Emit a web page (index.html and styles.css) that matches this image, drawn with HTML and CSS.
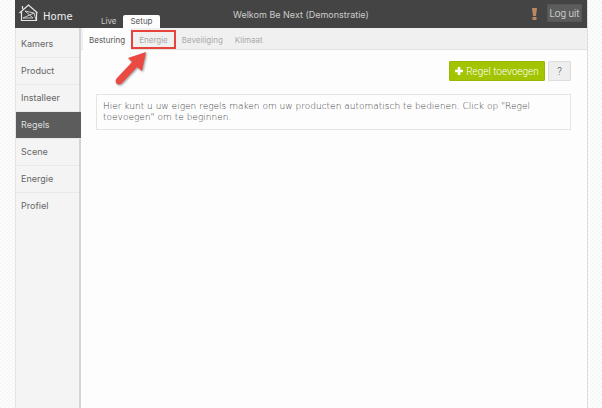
FILE: index.html
```
<!DOCTYPE html>
<html lang="nl">
<head>
    <meta charset="utf-8">
    <title>Regels</title>
    <link rel="stylesheet" href="styles.css">
</head>
<body>
    <div class="page">
        <header class="header">
            <a class="home" href="#">
                <svg class="logo" viewBox="0 0 20 20" fill="none" stroke="#e8e8e8">
                    <path d="M0.5 11 L9.5 3 L18.5 11 M2.5 10 V18.5 H17.5 V10 M3.5 7 V4" stroke-width="1.2"/>
                    <path d="M6 9 L15 11 L4 16 L14 16 L6 9 M15 11 L17 18" stroke-width="0.8"/>
                </svg>
                Home
            </a>
            <nav class="main-tabs">
                <a href="#">Live</a>
                <a class="active" href="#">Setup</a>
            </nav>
            <div class="welcome">Welkom Be Next (Demonstratie)</div>
            <svg class="alert" viewBox="0 0 5 12" fill="#b98a62">
                <path d="M0 0 H5 L4 8 H1 Z M0.5 9 H4.5 V12 H0.5 Z"/>
            </svg>
            <button class="logout" type="button">Log uit</button>
        </header>
        <div class="body">
            <nav class="sidebar">
                <a href="#">Kamers</a>
                <a href="#">Product</a>
                <a href="#">Installeer</a>
                <a class="active" href="#">Regels</a>
                <a href="#">Scene</a>
                <a href="#">Energie</a>
                <a href="#">Profiel</a>
            </nav>
            <main class="content">
                <nav class="sub-tabs">
                    <a class="active" href="#">Besturing</a>
                    <a class="marked" href="#">Energie
                        <svg class="arrow" viewBox="0 0 34 36">
                            <path d="M31 2 L27 21 L22 17 L7 33 Q4 36 1 33 Q0 30 2 28 L17 12 L13 8 Z" fill="#ea4a42"/>
                        </svg>
                    </a>
                    <a href="#">Beveiliging</a>
                    <a href="#">Klimaat</a>
                </nav>
                <div class="toolbar">
                    <button class="add" type="button">
                        <svg viewBox="0 0 8 8" fill="#fff"><path d="M2.7 0 H5.3 V2.7 H8 V5.3 H5.3 V8 H2.7 V5.3 H0 V2.7 H2.7 Z"/></svg>
                        Regel toevoegen
                    </button>
                    <button class="help" type="button">?</button>
                </div>
                <p class="info">Hier kunt u uw eigen regels maken om uw producten automatisch te bedienen. Click op "Regel toevoegen" om te beginnen.</p>
            </main>
        </div>
    </div>
</body>
</html>
```

FILE: styles.css
```
* {
    box-sizing: border-box;
}
body {
    margin: 0;
    font-family: Inter, "DejaVu Sans", sans-serif;
    font-size: 9px;
    color: #666;
    background: repeating-conic-gradient(#f7f7f7 0 25%, #fdfdfd 0 50%) 0 0 / 4px 4px;
}
a {
    color: inherit;
    text-decoration: none;
}
button {
    padding: 0;
    font-family: Roboto, sans-serif;
    font-size: 10px;
    font-weight: 300;
    border-radius: 1px;
}
.page {
    display: flex;
    flex-direction: column;
    min-height: 100vh;
    margin: 0 14px 0 15px;
    background: #fdfdfd;
    border-right: 1px solid #ddd;
}
.header {
    display: flex;
    height: 28px;
    color: #ccc;
    background: #444;
}
.home {
    display: flex;
    width: 79px;
    padding-left: 4px;
    gap: 4px;
    font-family: "DejaVu Sans", sans-serif;
    font-size: 10px;
    line-height: 33px;
    color: #eee;
}
.logo {
    width: 20px;
    height: 20px;
    margin-top: 2px;
}
.main-tabs {
    display: flex;
    align-items: flex-end;
    width: 139px;
    font-size: 8px;
    line-height: 13px;
}
.main-tabs a {
    padding: 0 7px;
}
.main-tabs .active {
    color: #555;
    background: #fdfdfd;
    border-radius: 2px 2px 0 0;
}
.welcome {
    line-height: 30px;
}
.alert {
    width: 5px;
    height: 12px;
    margin: 8px 10px 0 auto;
}
.logout {
    width: 35px;
    height: 18px;
    margin: 4px 5px 0 0;
    color: #eee;
    background: #5c5c5c;
    border: 1px solid #555;
}
.body {
    display: flex;
    flex: 1;
}
.sidebar {
    width: 66px;
    padding-top: 3px;
    background: #f4f4f4;
    border-left: 1px solid #e4e4e4;
    border-right: 2px solid #d4d4d4;
}
.sidebar a {
    display: block;
    height: 27px;
    padding-left: 5px;
    line-height: 25px;
    border-bottom: 1px solid #e9e9e9;
}
.sidebar a:last-child {
    border-bottom: none;
}
.sidebar .active {
    margin-right: -2px;
    color: #ddd;
    background: #5c5c5c;
}
.content {
    flex: 1;
}
.sub-tabs {
    display: flex;
    height: 22px;
    padding-left: 2px;
    font-size: 8px;
    line-height: 24px;
    color: #aaa;
    background: #f0f0f0;
    border-bottom: 1px solid #e2e2e2;
}
.sub-tabs a {
    padding: 0 6px;
}
.sub-tabs .active {
    height: 22px;
    color: #555;
    background: #fdfdfd;
}
.sub-tabs .marked {
    position: relative;
    height: 19px;
    margin-top: 2px;
    line-height: 16px;
    border: 2px solid #e5433b;
}
.arrow {
    position: absolute;
    top: 18px;
    left: -18px;
    width: 34px;
    height: 36px;
    filter: drop-shadow(1px 1px 1px rgba(0, 0, 0, 0.4));
}
.toolbar {
    display: flex;
    justify-content: flex-end;
    gap: 3px;
    padding: 11px 16px 13px;
}
.add {
    display: flex;
    align-items: center;
    justify-content: center;
    gap: 3px;
    width: 96px;
    height: 20px;
    color: #fff;
    background: #a3c400;
    border: 1px solid #98b800;
}
.add svg {
    width: 8px;
    height: 8px;
}
.help {
    width: 23px;
    color: #444;
    background: #eee;
    border: 1px solid #ddd;
}
.info {
    margin: 0 16px 0 15px;
    padding: 6px;
    font-family: "DejaVu Sans", sans-serif;
    font-weight: 200;
    line-height: 11px;
    color: #444;
    border: 1px solid #e5e5e5;
}
```
